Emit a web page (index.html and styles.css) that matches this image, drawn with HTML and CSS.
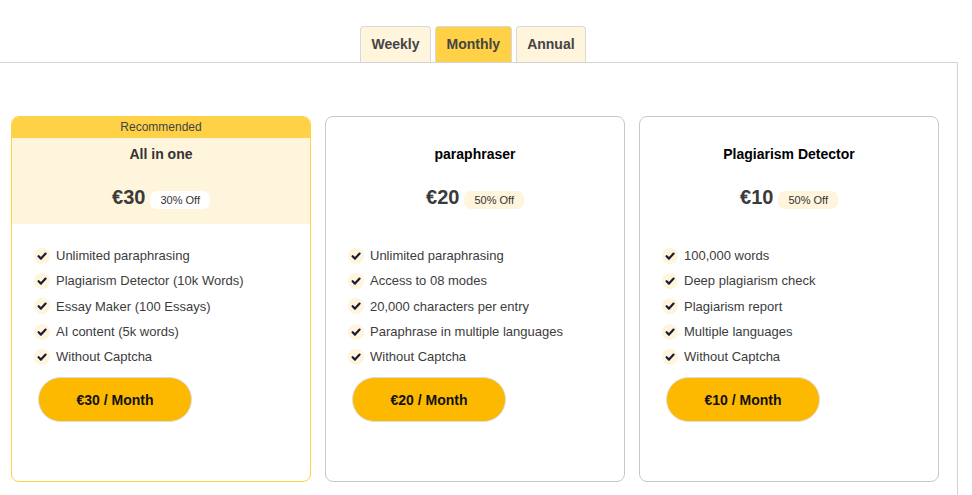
FILE: index.html
```html
<!DOCTYPE html>
<html lang="en">
<head>
<meta charset="utf-8">
<title>Pricing</title>
<link rel="stylesheet" href="styles.css">
</head>
<body>
<div class="page">
  <div class="tabs">
    <button class="tab">Weekly</button>
    <button class="tab active">Monthly</button>
    <button class="tab">Annual</button>
  </div>
  <div class="panel">
    <div class="cards">
      <div class="card featured">
        <div class="ribbon">Recommended</div>
        <div class="top">
          <div class="title">All in one</div>
          <div class="price-row"><span class="price">€30</span><span class="badge">30% Off</span></div>
        </div>
        <ul class="features">
          <li><span class="check"><svg viewBox="0 0 16 16" width="16" height="16"><path d="M4.6 8.2 L7 10.6 L11.6 5.6" fill="none" stroke="#1b1b35" stroke-width="2.2" stroke-linecap="round" stroke-linejoin="round"/></svg></span>Unlimited paraphrasing</li>
          <li><span class="check"><svg viewBox="0 0 16 16" width="16" height="16"><path d="M4.6 8.2 L7 10.6 L11.6 5.6" fill="none" stroke="#1b1b35" stroke-width="2.2" stroke-linecap="round" stroke-linejoin="round"/></svg></span>Plagiarism Detector (10k Words)</li>
          <li><span class="check"><svg viewBox="0 0 16 16" width="16" height="16"><path d="M4.6 8.2 L7 10.6 L11.6 5.6" fill="none" stroke="#1b1b35" stroke-width="2.2" stroke-linecap="round" stroke-linejoin="round"/></svg></span>Essay Maker (100 Essays)</li>
          <li><span class="check"><svg viewBox="0 0 16 16" width="16" height="16"><path d="M4.6 8.2 L7 10.6 L11.6 5.6" fill="none" stroke="#1b1b35" stroke-width="2.2" stroke-linecap="round" stroke-linejoin="round"/></svg></span>AI content (5k words)</li>
          <li><span class="check"><svg viewBox="0 0 16 16" width="16" height="16"><path d="M4.6 8.2 L7 10.6 L11.6 5.6" fill="none" stroke="#1b1b35" stroke-width="2.2" stroke-linecap="round" stroke-linejoin="round"/></svg></span>Without Captcha</li>
        </ul>
        <button class="buy">€30 / Month</button>
      </div>
      <div class="card">
        <div class="ribbon blank"></div>
        <div class="top">
          <div class="title dark">paraphraser</div>
          <div class="price-row"><span class="price">€20</span><span class="badge">50% Off</span></div>
        </div>
        <ul class="features">
          <li><span class="check"><svg viewBox="0 0 16 16" width="16" height="16"><path d="M4.6 8.2 L7 10.6 L11.6 5.6" fill="none" stroke="#1b1b35" stroke-width="2.2" stroke-linecap="round" stroke-linejoin="round"/></svg></span>Unlimited paraphrasing</li>
          <li><span class="check"><svg viewBox="0 0 16 16" width="16" height="16"><path d="M4.6 8.2 L7 10.6 L11.6 5.6" fill="none" stroke="#1b1b35" stroke-width="2.2" stroke-linecap="round" stroke-linejoin="round"/></svg></span>Access to 08 modes</li>
          <li><span class="check"><svg viewBox="0 0 16 16" width="16" height="16"><path d="M4.6 8.2 L7 10.6 L11.6 5.6" fill="none" stroke="#1b1b35" stroke-width="2.2" stroke-linecap="round" stroke-linejoin="round"/></svg></span>20,000 characters per entry</li>
          <li><span class="check"><svg viewBox="0 0 16 16" width="16" height="16"><path d="M4.6 8.2 L7 10.6 L11.6 5.6" fill="none" stroke="#1b1b35" stroke-width="2.2" stroke-linecap="round" stroke-linejoin="round"/></svg></span>Paraphrase in multiple languages</li>
          <li><span class="check"><svg viewBox="0 0 16 16" width="16" height="16"><path d="M4.6 8.2 L7 10.6 L11.6 5.6" fill="none" stroke="#1b1b35" stroke-width="2.2" stroke-linecap="round" stroke-linejoin="round"/></svg></span>Without Captcha</li>
        </ul>
        <button class="buy">€20 / Month</button>
      </div>
      <div class="card">
        <div class="ribbon blank"></div>
        <div class="top">
          <div class="title dark">Plagiarism Detector</div>
          <div class="price-row"><span class="price">€10</span><span class="badge">50% Off</span></div>
        </div>
        <ul class="features">
          <li><span class="check"><svg viewBox="0 0 16 16" width="16" height="16"><path d="M4.6 8.2 L7 10.6 L11.6 5.6" fill="none" stroke="#1b1b35" stroke-width="2.2" stroke-linecap="round" stroke-linejoin="round"/></svg></span>100,000 words</li>
          <li><span class="check"><svg viewBox="0 0 16 16" width="16" height="16"><path d="M4.6 8.2 L7 10.6 L11.6 5.6" fill="none" stroke="#1b1b35" stroke-width="2.2" stroke-linecap="round" stroke-linejoin="round"/></svg></span>Deep plagiarism check</li>
          <li><span class="check"><svg viewBox="0 0 16 16" width="16" height="16"><path d="M4.6 8.2 L7 10.6 L11.6 5.6" fill="none" stroke="#1b1b35" stroke-width="2.2" stroke-linecap="round" stroke-linejoin="round"/></svg></span>Plagiarism report</li>
          <li><span class="check"><svg viewBox="0 0 16 16" width="16" height="16"><path d="M4.6 8.2 L7 10.6 L11.6 5.6" fill="none" stroke="#1b1b35" stroke-width="2.2" stroke-linecap="round" stroke-linejoin="round"/></svg></span>Multiple languages</li>
          <li><span class="check"><svg viewBox="0 0 16 16" width="16" height="16"><path d="M4.6 8.2 L7 10.6 L11.6 5.6" fill="none" stroke="#1b1b35" stroke-width="2.2" stroke-linecap="round" stroke-linejoin="round"/></svg></span>Without Captcha</li>
        </ul>
        <button class="buy">€10 / Month</button>
      </div>
    </div>
  </div>
</div>
</body>
</html>
```

FILE: styles.css
```css
* { box-sizing: border-box; }
html, body { margin: 0; padding: 0; background: #fff; }
body {
  font-family: "Liberation Sans", Arial, sans-serif;
  color: #444;
  overflow: hidden;
}
.page { width: 972px; }
.tabs {
  display: flex;
  gap: 4px;
  padding-top: 26px;
  padding-left: 360px;
}
.tab {
  height: 36px;
  padding: 0 10.5px 1px;
  font-family: inherit;
  font-size: 14px;
  font-weight: bold;
  color: #444;
  background: #fff4dc;
  border: 1px solid #d9d9d9;
  border-bottom: none;
  border-radius: 4px 4px 0 0;
  cursor: pointer;
}
.tab.active { background: #ffd147; }
.panel {
  width: 958px;
  height: 433px;
  border-top: 1px solid #d3d3d3;
  border-right: 1px solid #d3d3d3;
  padding: 53px 0 0 11px;
}
.cards {
  display: flex;
  gap: 14px;
}
.card {
  width: 300px;
  height: 366px;
  border: 1px solid #c8c8c8;
  border-radius: 8px;
  overflow: hidden;
  display: flex;
  flex-direction: column;
}
.card.featured { border-color: #ffd147; }
.ribbon {
  height: 21px;
  line-height: 21px;
  text-align: center;
  font-size: 12px;
  color: #444;
  background: #ffd147;
}
.ribbon.blank { background: transparent; }
.top {
  height: 86px;
  padding-top: 8px;
}
.featured .top { background: #fff4dc; }
.title {
  text-align: center;
  font-size: 14px;
  line-height: 17px;
  font-weight: bold;
  color: #333;
}
.title.dark { color: #000; }
.price-row {
  margin-top: 22px;
  display: flex;
  justify-content: center;
  align-items: baseline;
  gap: 5px;
}
.price {
  font-size: 20px;
  line-height: 24px;
  font-weight: bold;
  color: #3a3a3a;
}
.badge {
  font-size: 11px;
  line-height: 18px;
  padding: 0 10px;
  border-radius: 7px;
  background: #fff4dc;
  color: #333;
}
.featured .badge { background: #fff; }
.features {
  list-style: none;
  margin: 0;
  padding: 19px 0 0 22px;
}
.features li {
  display: flex;
  align-items: center;
  gap: 6px;
  height: 25.3px;
  font-size: 13px;
  color: #3c3c3c;
}
.check {
  width: 16px;
  height: 16px;
  border-radius: 50%;
  background: #fff4dc;
  display: flex;
}
.buy {
  margin: 8px 0 0 26px;
  width: 154px;
  height: 45px;
  border: 1px solid #dcdcdc;
  border-radius: 23px;
  background: #fcb900;
  font-family: inherit;
  font-size: 14px;
  font-weight: bold;
  color: #111;
  cursor: pointer;
}
```
